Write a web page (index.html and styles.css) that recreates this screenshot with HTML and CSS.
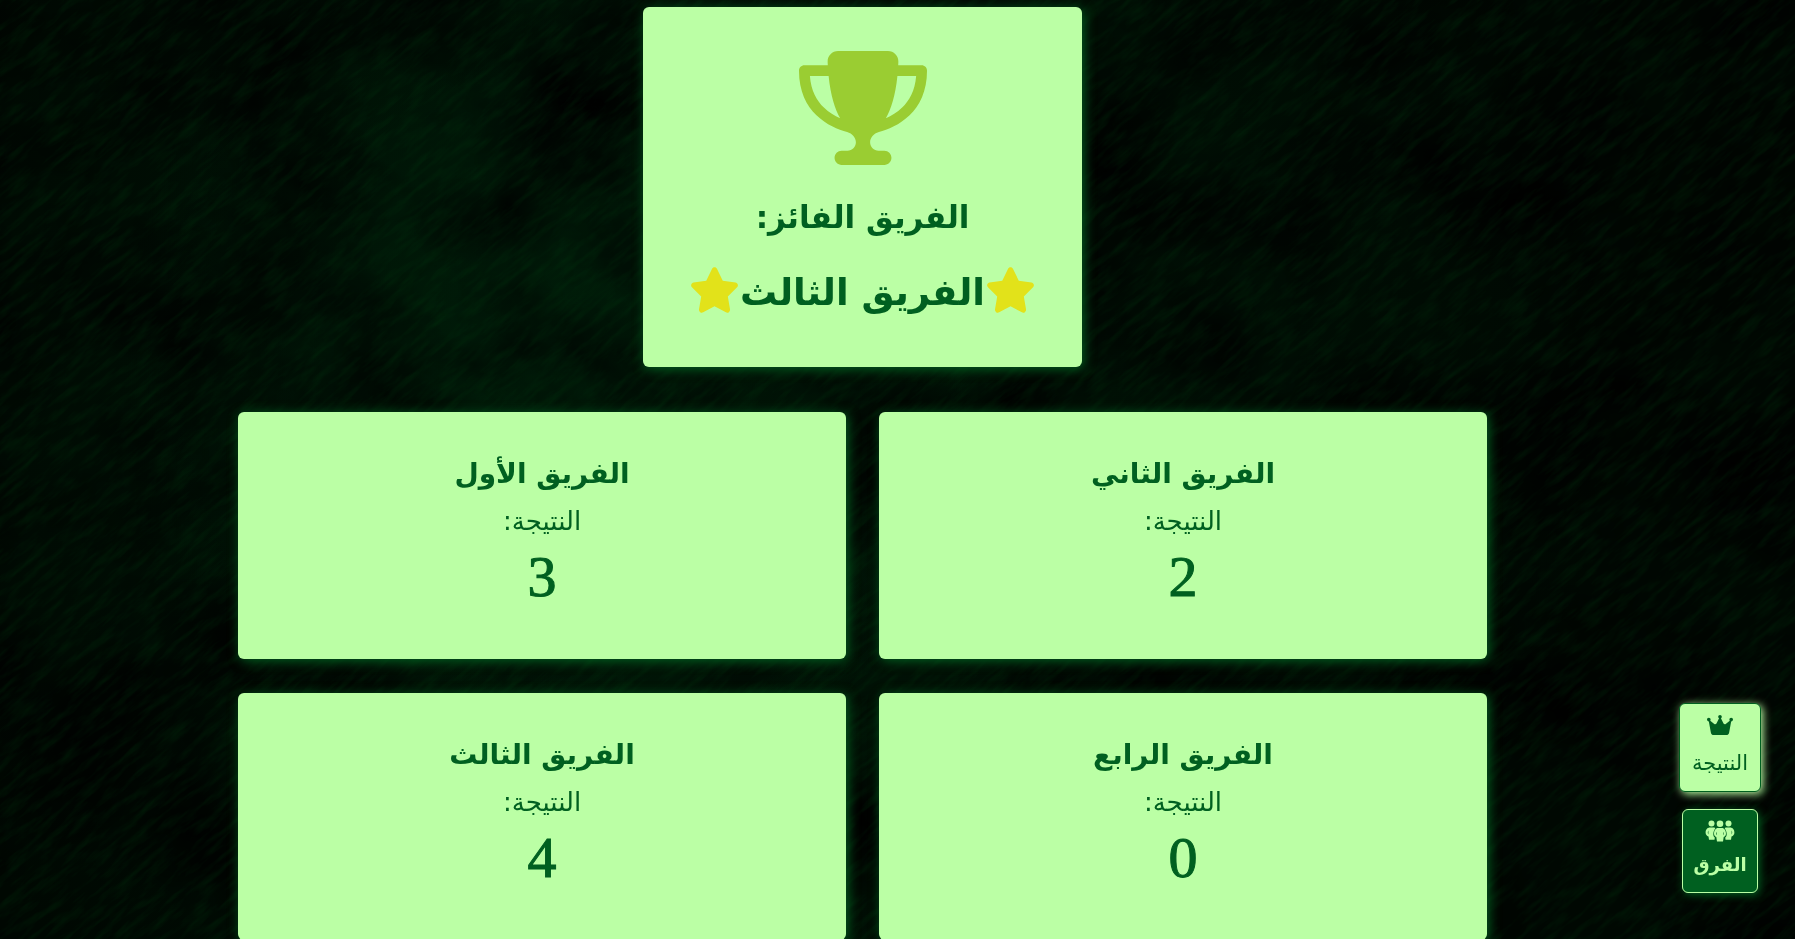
FILE: index.html
```html
<!DOCTYPE html>
<html lang="ar" dir="rtl">
<head>
<meta charset="utf-8">
<meta name="viewport" content="width=device-width, initial-scale=1">
<title>النتيجة</title>
<link rel="stylesheet" href="styles.css">
</head>
<body>
<svg class="backdrop" aria-hidden="true">
  <filter id="shade" x="0" y="0" width="100%" height="100%" color-interpolation-filters="sRGB">
    <feTurbulence type="fractalNoise" baseFrequency="0.006 0.008" numOctaves="6" seed="14"/>
    <feColorMatrix values="0 0 0 0 0  0 0 0 0 0  0 0 0 0 0  2 0 0 0 -0.7"/>
  </filter>
  <filter id="grain" x="-20%" y="-20%" width="140%" height="140%" color-interpolation-filters="sRGB">
    <feTurbulence type="fractalNoise" baseFrequency="0.03 0.15" numOctaves="4" seed="5"/>
    <feColorMatrix values="0 0 0 0 0  0 0 0 0 0.24  0 0 0 0 0.06  0.6 0 0 0 -0.26"/>
  </filter>
  <rect width="100%" height="100%" filter="url(#shade)"/>
  <g transform="rotate(-40 700 450)"><rect x="-20%" y="-60%" width="140%" height="220%" filter="url(#grain)"/></g>
</svg>

<svg class="sprite" aria-hidden="true">
  <symbol id="trophy" viewBox="0 0 576 512"><path d="M400 0H176c-26.500 0-48.100 21.800-47.100 48.200c.2 5.300 .4 10.600 .7 15.800H24C10.700 64 0 74.700 0 88c0 92.600 33.500 157 78.500 200.700c44.300 43.100 98.300 64.800 138.100 75.800c23.400 6.500 39.400 26 39.400 45.600c0 20.900-17 37.900-37.900 37.900H192c-17.700 0-32 14.300-32 32s14.300 32 32 32H384c17.700 0 32-14.300 32-32s-14.300-32-32-32H357.900C337 448 320 431 320 410.100c0-19.600 15.900-39.200 39.400-45.600c39.900-11 93.900-32.700 138.200-75.800C542.500 245 576 180.600 576 88c0-13.300-10.700-24-24-24H446.400c.3-5.200 .5-10.400 .7-15.800C448.100 21.800 426.500 0 400 0zM48.900 112h84.400c9.100 90.100 29.200 150.300 51.900 190.600c-24.900-11-50.800-26.500-73.200-48.300c-32-31.100-58-76-63-142.300zM464.100 254.300c-22.400 21.800-48.300 37.300-73.200 48.300c22.700-40.300 42.800-100.500 51.900-190.600h84.400c-5.100 66.300-31.100 111.200-63 142.300z"/></symbol>
  <symbol id="star" viewBox="0 0 576 512"><path d="M316.900 18C311.600 7 300.400 0 288.100 0s-23.400 7-28.800 18L195 150.300 51.400 171.500c-12 1.800-22 10.200-25.700 21.700s-.7 24.200 7.900 32.700L137.800 329 113.200 474.700c-2 12 3 24.200 12.900 31.300s23 8 33.800 2.300l128.300-68.500 128.300 68.500c10.800 5.700 23.900 4.900 33.800-2.300s14.900-19.300 12.900-31.300L438.500 329 542.700 225.900c8.600-8.500 11.700-21.200 7.900-32.700s-13.700-19.900-25.700-21.700L381.200 150.300 316.900 18z"/></symbol>
  <symbol id="crown" viewBox="0 0 576 512"><path d="M309 106c11.400-7 19-19.700 19-34c0-22.100-17.900-40-40-40s-40 17.900-40 40c0 14.400 7.600 27 19 34L209.700 220.600c-9.100 18.200-32.700 23.400-48.600 10.700L72 160c5-6.700 8-15 8-24c0-22.100-17.900-40-40-40S0 113.900 0 136s17.900 40 40 40c.2 0 .5 0 .7 0L86.400 427.400c5.500 30.400 32 52.600 63 52.600H426.600c30.900 0 57.400-22.100 63-52.600L535.300 176c.2 0 .5 0 .7 0c22.100 0 40-17.900 40-40s-17.900-40-40-40s-40 17.900-40 40c0 9 3 17.300 8 24l-89.100 71.300c-15.900 12.700-39.500 7.500-48.600-10.700L309 106z"/></symbol>
  <symbol id="people" viewBox="0 0 30 24">
    <circle cx="6.500" cy="4.500" r="3"/><circle cx="23.500" cy="4.500" r="3"/><circle cx="15" cy="4.800" r="3.300"/>
    <path d="M5 8.500h4.500l.8 1c-1.300 1.700-2 3.700-2 5.700 0 1.600.6 2.800 1.500 3.300l-.3 2.300H4l-.5-3.300C1.800 17 .6 15.500.6 13.500c0-2.800 1.700-5 4.400-5zM3.400 11.600c-.8 1.200-.8 2.800 0 4z" fill-rule="evenodd"/>
    <path d="M25 8.500h-4.500l-.8 1c1.300 1.700 2 3.700 2 5.700 0 1.600-.6 2.800-1.500 3.300l.3 2.300H26l.5-3.300c1.700-.5 2.900-2 2.900-4 0-2.800-1.700-5-4.400-5zM26.600 11.600c.8 1.200.8 2.800 0 4z" fill-rule="evenodd"/>
    <path d="M13 9h4c2.300 0 4 2.700 4 5.500 0 1.700-.9 3-2.300 3.500L18 22.500h-6L11.300 18C9.900 17.500 9 16.200 9 14.500 9 11.700 10.700 9 13 9zM11.600 12.700c-.8 1.200-.8 2.600 0 3.600zM18.400 12.700v3.600c.8-1 .8-2.400 0-3.600z" fill-rule="evenodd"/>
  </symbol>
</svg>

<main class="page">
  <section class="card winner">
    <svg class="trophy" aria-hidden="true"><use href="#trophy"/></svg>
    <h2 class="winner-label">الفريق الفائز:</h2>
    <h1 class="winner-name"><svg class="star" aria-hidden="true"><use href="#star"/></svg><span>الفريق الثالث</span><svg class="star" aria-hidden="true"><use href="#star"/></svg></h1>
  </section>

  <section class="teams">
    <article class="card team"><h3 class="team-name">الفريق الثاني</h3><p class="team-label">النتيجة:</p><p class="score">2</p></article>
    <article class="card team"><h3 class="team-name">الفريق الأول</h3><p class="team-label">النتيجة:</p><p class="score">3</p></article>
    <article class="card team"><h3 class="team-name">الفريق الرابع</h3><p class="team-label">النتيجة:</p><p class="score">0</p></article>
    <article class="card team"><h3 class="team-name">الفريق الثالث</h3><p class="team-label">النتيجة:</p><p class="score">4</p></article>
  </section>
</main>

<nav class="dock">
  <button class="tab tab-active" type="button"><svg class="tab-icon crown" aria-hidden="true"><use href="#crown"/></svg><span>النتيجة</span></button>
  <button class="tab" type="button"><svg class="tab-icon" aria-hidden="true"><use href="#people"/></svg><span>الفرق</span></button>
</nav>
</body>
</html>
```
FILE: styles.css
```css
* { box-sizing: border-box; margin: 0; }
html { background: #000501; }
body {
  min-height: 100vh;
  color: #006020;
  font-family: "DejaVu Sans", sans-serif;
  overflow: hidden;
}
svg { fill: currentColor; }
.backdrop {
  position: fixed;
  inset: 0;
  z-index: -1;
  width: 100%;
  height: 100%;
  background:
    radial-gradient(ellipse 24% 50% at 31% 38%, #001c09, transparent),
    radial-gradient(ellipse 50% 90% at 40% 40%, #001607, transparent),
    #000802;
  fill: #000;
}
.sprite { display: none; }
.page {
  display: flex;
  flex-direction: column;
  align-items: center;
  gap: 45px;
  padding: 7px 70px 0 0;
}
.card {
  display: flex;
  flex-direction: column;
  align-items: center;
  background: #bbffa5;
  border-radius: 6px;
  box-shadow: 2px 2px 12px #006020;
}
.winner { padding: 44px 46px 40px; }
.trophy { width: 128px; height: 114px; color: #9acd32; }
.winner-label { margin-top: 24px; font-size: 31px; line-height: 56px; }
.winner-name {
  display: flex;
  align-items: center;
  margin-top: 14px;
  font-size: 37px;
  line-height: 68px;
}
.star { width: 51px; height: 46px; margin-bottom: 6px; color: #e2e21a; }
.teams {
  display: grid;
  grid-template-columns: 1fr 1fr;
  gap: 34px 33px;
  width: 72.4%;
}
.team { padding: 38px 32px 50px; }
.team-name { font-size: 28px; line-height: 48px; }
.team-label { font-size: 26px; line-height: 46px; }
.score {
  font-family: "Liberation Serif", serif;
  font-size: 58px;
  line-height: 65px;
  -webkit-text-stroke: 1px currentColor;
}
.dock {
  position: fixed;
  right: 34px;
  bottom: 46px;
  display: flex;
  flex-direction: column;
  align-items: center;
  gap: 17px;
}
.tab {
  display: flex;
  flex-direction: column;
  align-items: center;
  gap: 4px;
  min-width: 76px;
  padding: 9px 10px;
  border: 1px solid #bbffa5;
  border-radius: 6px;
  background: #006020;
  color: #bbffa5;
  font: bold 18px/36px "DejaVu Sans", sans-serif;
  box-shadow: 2px 2px 8px #006020;
}
.tab-active {
  gap: 7px;
  min-width: 82px;
  background: #bbffa5;
  border-color: #006020;
  color: #006020;
  font-size: 21px;
  line-height: 38px;
  font-weight: 400;
  box-shadow: 2px 2px 8px #bbffa5;
}
.tab-icon { width: 30px; height: 24px; }
.crown { width: 26px; }
```
